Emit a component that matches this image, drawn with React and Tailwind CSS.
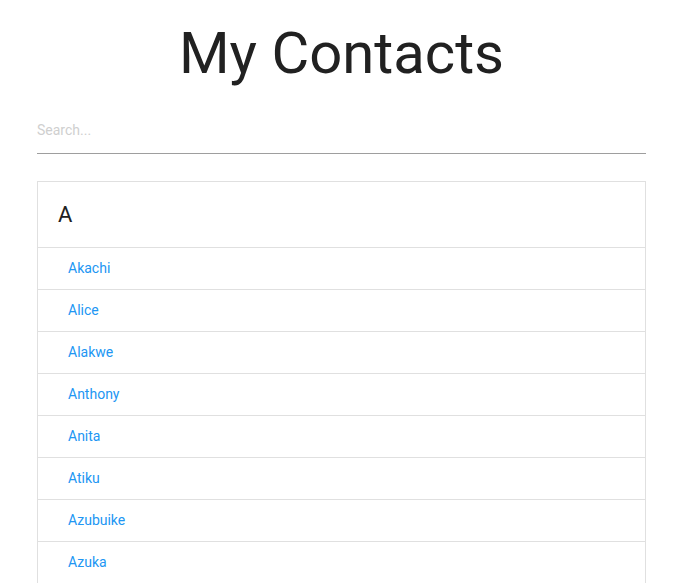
import React from 'react';

const contacts = ['Akachi', 'Alice', 'Alakwe', 'Anthony', 'Anita', 'Atiku', 'Azubuike', 'Azuka'];

const App = () => {
  return (
    <div className="min-h-screen bg-white font-['Roboto',sans-serif]">
      <div className="ml-[37px] w-[609px]">
        <h1 className="mt-[22px] text-center text-[58px] leading-[1.1] font-normal text-[#212121]">
          My Contacts
        </h1>
        <input
          type="text"
          placeholder="Search..."
          className="mt-[22px] block h-[46px] w-full border-b border-[#9e9e9e] bg-transparent text-[14px] text-[#212121] outline-none placeholder:text-[#cfcfcf]"
        />
        <ul className="mt-[27px] border border-[#e0e0e0]">
          <li className="flex h-[66px] items-center border-b border-[#e0e0e0] px-[20px] text-[22px] text-[#212121]">
            A
          </li>
          {contacts.map((name) => (
            <li
              key={name}
              className="flex h-[42px] items-center border-b border-[#e0e0e0] pl-[30px] text-[14px] text-[#2196f3]"
            >
              {name}
            </li>
          ))}
        </ul>
      </div>
    </div>
  );
};

export default App;
